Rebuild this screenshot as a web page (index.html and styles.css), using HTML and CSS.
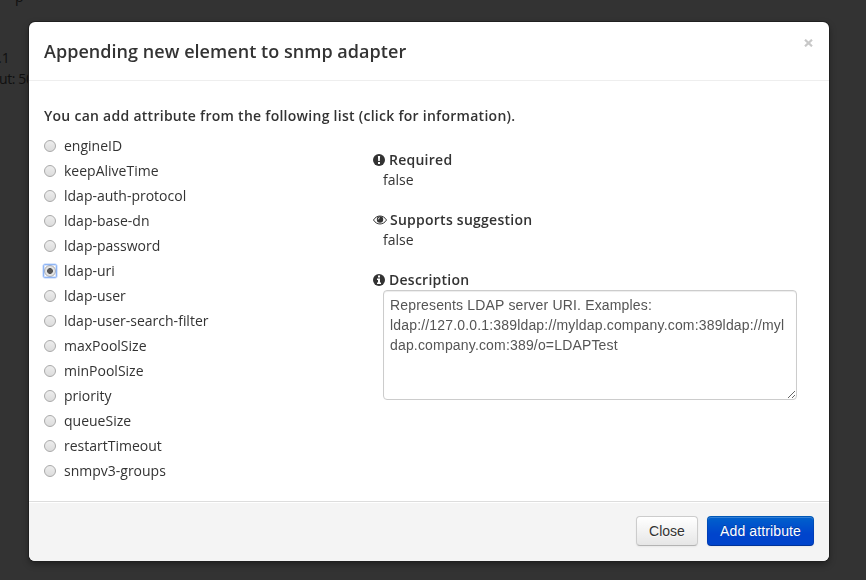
FILE: index.html
```html
<!DOCTYPE html>
<html lang="en">
<head>
<meta charset="utf-8">
<title>Append element</title>
<link rel="stylesheet" href="styles.css">
</head>
<body>
<div class="page">
  <div class="page-line page-first">p</div>
  <div class="page-line page-ip">.1</div>
  <div class="page-line page-port">ut: 50</div>
</div>
<div class="overlay">
  <section class="modal">
    <header class="modal-header">
      <h3>Appending new element to snmp adapter</h3>
      <button class="dismiss" aria-label="Close"><svg width="9" height="8" viewBox="0 0 9 8"><path d="M1 .7l7 6.600M8 .7L1 7.300" fill="none" stroke="#c8c8c8" stroke-width="2.200"/></svg></button>
    </header>
    <div class="modal-body">
      <p class="intro">You can add attribute from the following list (click for information).</p>
      <div class="columns">
        <div class="choices">
          <label><input type="radio" name="attr"><span>engineID</span></label>
          <label><input type="radio" name="attr"><span>keepAliveTime</span></label>
          <label><input type="radio" name="attr"><span>ldap-auth-protocol</span></label>
          <label><input type="radio" name="attr"><span>ldap-base-dn</span></label>
          <label><input type="radio" name="attr"><span>ldap-password</span></label>
          <label><input type="radio" name="attr" checked><span>ldap-uri</span></label>
          <label><input type="radio" name="attr"><span>ldap-user</span></label>
          <label><input type="radio" name="attr"><span>ldap-user-search-filter</span></label>
          <label><input type="radio" name="attr"><span>maxPoolSize</span></label>
          <label><input type="radio" name="attr"><span>minPoolSize</span></label>
          <label><input type="radio" name="attr"><span>priority</span></label>
          <label><input type="radio" name="attr"><span>queueSize</span></label>
          <label><input type="radio" name="attr"><span>restartTimeout</span></label>
          <label><input type="radio" name="attr"><span>snmpv3-groups</span></label>
        </div>
        <dl class="details">
          <dt><svg width="12" height="12" viewBox="0 0 12 12"><circle cx="6" cy="6" r="6" fill="#333"/><path d="M4.900 2h2.200l-.3 5H5.200zM5 8h2v2H5z" fill="#fff"/></svg><span>Required</span></dt>
          <dd>false</dd>
          <dt class="suggest"><svg width="14" height="12" viewBox="0 0 14 12"><path d="M.5 6C3.600.7 10.400.7 13.500 6C10.400 11.300 3.600 11.300.5 6z" fill="none" stroke="#333"/><circle cx="7" cy="5.500" r="3.200" fill="#333"/><path d="M5.200 5.500Q5.200 3.700 7 3.700" fill="none" stroke="#fff" stroke-width=".8"/></svg><span>Supports suggestion</span></dt>
          <dd>false</dd>
          <dt><svg width="12" height="12" viewBox="0 0 12 12"><circle cx="6" cy="6" r="6" fill="#333"/><path d="M5 1.500h2v2H5zM4 4.500h3v4h1V10H4V8.500h1V6H4z" fill="#fff"/></svg><span>Description</span></dt>
          <dd><textarea spellcheck="false">Represents LDAP server URI. Examples: ldap://127.0.0.1:389ldap://myldap.company.com:389ldap://myldap.company.com:389/o=LDAPTest</textarea></dd>
        </dl>
      </div>
    </div>
    <footer class="modal-footer">
      <button class="btn">Close</button>
      <button class="btn primary">Add attribute</button>
    </footer>
  </section>
</div>
</body>
</html>
```
FILE: styles.css
```css
* { box-sizing: border-box; }
body {
  margin: 0;
  height: 580px;
  overflow: hidden;
  background: #333;
  color: #333;
  font: 14px/20px "Open Sans", sans-serif;
}
.page { color: #101010; height: 580px; overflow: hidden; }
.page-line { height: 20px; white-space: nowrap; }
.page-first { margin: -13px 0 0 15px; }
.page-ip { margin: 41px 0 0 -2px; }
.page-port { margin: 1px 0 0 -1px; letter-spacing: -.4px; }
.overlay {
  position: fixed;
  inset: 0;
  display: flex;
  justify-content: center;
  align-items: flex-start;
  padding: 22px 37px 0 29px;
}
.modal {
  display: flex;
  flex-direction: column;
  width: 800px;
  height: 539px;
  background: #fff;
  border-radius: 6px;
  overflow: hidden;
  box-shadow: 0 0 0 1px #202020, 0 3px 7px rgba(0, 0, 0, .4);
}
.modal-header {
  display: flex;
  justify-content: space-between;
  align-items: flex-start;
  height: 59px;
  padding: 9px 15px 0;
  border-bottom: 1px solid #eee;
}
h3 { margin: 0; font-size: 18px; font-weight: 600; line-height: 40px; letter-spacing: .04px; }
.dismiss {
  display: flex;
  margin: 8px 1px 0 0;
  padding: 0;
  border: 0;
  background: none;
}
.modal-body { flex: 1; padding: 25px 15px 0; }
.intro { margin: 0 0 10px; font-weight: 600; letter-spacing: .27px; }
.columns { display: flex; }
.choices { width: 329px; }
.choices label { display: flex; align-items: center; gap: 8px; height: 20px; margin-bottom: 5px; }
.choices input {
  appearance: none;
  position: relative;
  width: 12px;
  height: 12px;
  margin: 0;
  border: 1px solid #a9a9a9;
  border-radius: 50%;
  background: linear-gradient(#ededed, #dcdcdc);
}
.choices input:checked {
  background: radial-gradient(circle, #555 0 2.6px, #e3e3e3 3.2px);
}
.choices input:checked::before {
  content: "";
  position: absolute;
  inset: -2px;
  border: 1px solid #8fb5f5;
  border-radius: 2px;
  box-shadow: inset 0 0 0 1px rgba(143, 181, 245, .35), 0 0 0 .5px #b5cffa;
}
.details { margin: 14px 0 0; }
dt { display: flex; align-items: center; gap: 4px; height: 20px; font-weight: 600; letter-spacing: .25px; }
.suggest { gap: 3px; }
dd { height: 20px; margin: 0 0 20px 10px; }
textarea {
  display: block;
  width: 414px;
  height: 110px;
  padding: 4px 6px;
  border: 1px solid #ccc;
  border-radius: 4px;
  box-shadow: inset 0 1px 1px rgba(0, 0, 0, .075);
  color: #555;
  background: #fff;
  font: 14px/20px "Liberation Sans", sans-serif;
  letter-spacing: .17px;
  word-wrap: break-word;
  overflow: auto;
  resize: both;
}
.modal-footer {
  display: flex;
  justify-content: flex-end;
  align-items: flex-start;
  gap: 9px;
  height: 60px;
  padding: 14px 15px 0;
  background: #f4f4f4;
  border-top: 1px solid #ddd;
  box-shadow: inset 0 1px 0 #fff;
}
.btn {
  width: 62px;
  height: 30px;
  padding: 0;
  border: 1px solid #ccc;
  border-bottom-color: #b3b3b3;
  border-radius: 4px;
  background: linear-gradient(#fff, #e6e6e6);
  box-shadow: inset 0 1px 0 rgba(255, 255, 255, .2), 0 1px 2px rgba(0, 0, 0, .05);
  color: #333;
  font: 14px/20px "Liberation Sans", sans-serif;
  text-shadow: 0 1px 1px rgba(255, 255, 255, .75);
}
.primary {
  width: 107px;
  border-color: rgba(0, 0, 0, .1) rgba(0, 0, 0, .1) rgba(0, 0, 0, .25);
  background: #04c linear-gradient(#0063cc, #04c 60%) border-box;
  color: #fff;
  letter-spacing: .12px;
  text-shadow: 0 -1px 0 rgba(0, 0, 0, .25);
}
```
